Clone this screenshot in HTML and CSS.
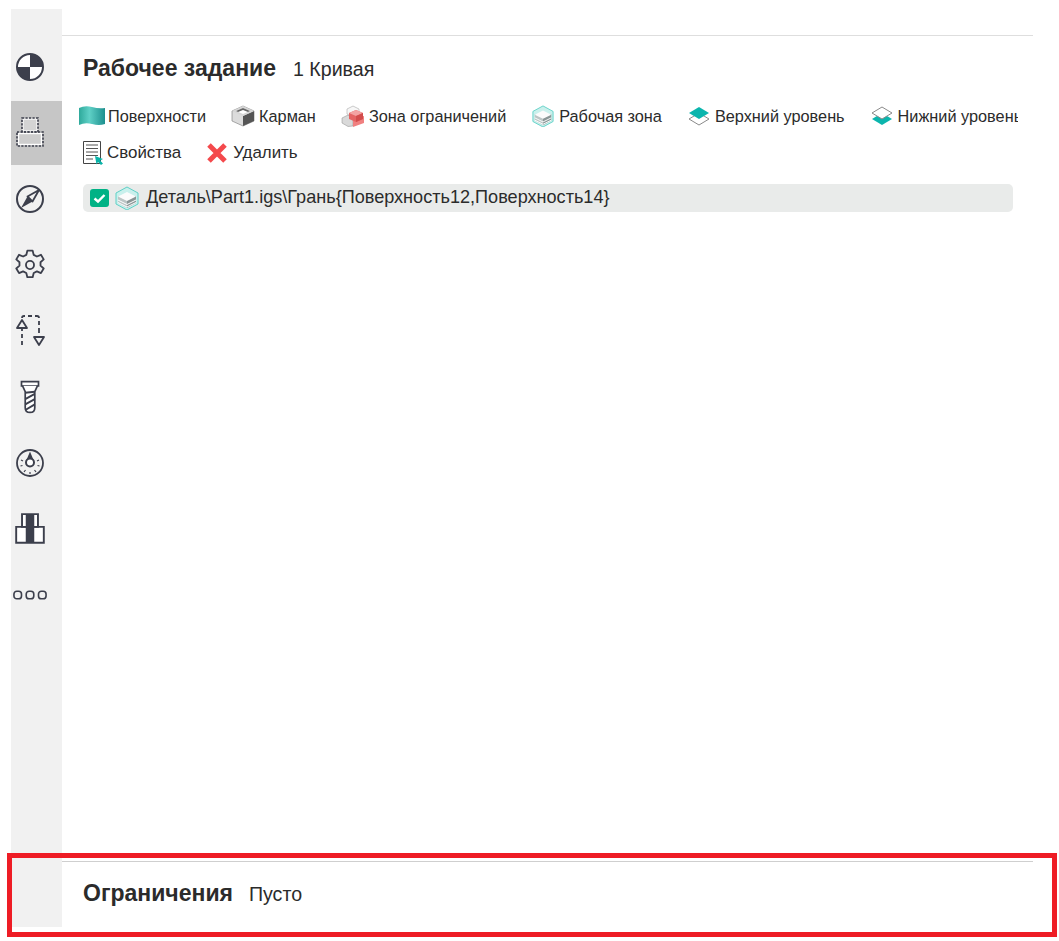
FILE: index.html
```html
<!DOCTYPE html>
<html lang="ru">
<head>
<meta charset="utf-8">
<title>Рабочее задание</title>
<link rel="stylesheet" href="styles.css">
</head>
<body>
<div class="page">
  <nav class="sidebar">
    <div class="nav-item">
      <svg class="nav-icon" viewBox="0 0 32 32"><circle cx="16" cy="16" r="13" fill="#fff" stroke="#3c3f4c" stroke-width="2"/><path d="M16 3a13 13 0 0 1 13 13H16z M16 16v13A13 13 0 0 1 3 16z" fill="#3c3f4c"/></svg>
    </div>
    <div class="nav-item active">
      <svg class="nav-icon" viewBox="0 0 32 32"><rect x="9" y="2" width="14" height="12" fill="#d4d4d4" stroke="#fff" stroke-width="1.200"/><rect x="8" y="1" width="16" height="14" fill="none" stroke="#3c3f4c" stroke-width="1.600" stroke-dasharray="2.200 1.300"/><rect x="4.500" y="16.500" width="23" height="11" fill="#cdcdcd" stroke="#fff" stroke-width="1.400"/><rect x="3" y="15" width="26" height="14" fill="none" stroke="#3c3f4c" stroke-width="1.600" stroke-dasharray="2.200 1.300"/></svg>
    </div>
    <div class="nav-item">
      <svg class="nav-icon" viewBox="0 0 32 32"><circle cx="16" cy="16" r="13" fill="none" stroke="#3c3f4c" stroke-width="2"/><path d="M25 7 18.500 18.500 13.500 13.500z" fill="none" stroke="#3c3f4c" stroke-width="1.800" stroke-linejoin="round"/><path d="M7 25 13.500 13.500 18.500 18.500z" fill="#3c3f4c"/></svg>
    </div>
    <div class="nav-item">
      <svg class="nav-icon wide" viewBox="0 0 32 32"><path d="M13.500 2.500h5l1 4 3 1.500 3.800-1.600 2.600 4.300-3 2.700v3.200l3 2.700-2.600 4.300-3.800-1.600-3 1.500-1 4h-5l-1-4-3-1.500-3.800 1.600-2.600-4.300 3-2.700v-3.200l-3-2.700 2.600-4.300 3.800 1.600 3-1.500z" fill="none" stroke="#3c3f4c" stroke-width="1.700" stroke-linejoin="round"/><circle cx="16" cy="16" r="3.800" fill="none" stroke="#3c3f4c" stroke-width="1.700"/></svg>
    </div>
    <div class="nav-item">
      <svg class="nav-icon" viewBox="0 0 32 32"><path d="M8 30v-4M8 23v-4M8 16v-4" fill="none" stroke="#3c3f4c" stroke-width="1.800"/><path d="M8 5l5 8H3z" fill="none" stroke="#3c3f4c" stroke-width="1.800" stroke-linejoin="round"/><path d="M8 3q0-2 2-2h1M14 1h4M21 1h2q2 0 2 2M25 6v4M25 13v5M25 30l-5-8h10z" fill="none" stroke="#3c3f4c" stroke-width="1.800" stroke-linejoin="round"/></svg>
    </div>
    <div class="nav-item">
      <svg class="nav-icon wide" viewBox="0 0 32 32"><path d="M8 1.500h16v4H8z" fill="#fff" stroke="#3c3f4c" stroke-width="1.600"/><path d="M9 5.500 11.500 11v15q0 4.500 4.500 4.500t4.500-4.500V11L23 5.500" fill="#fff" stroke="#3c3f4c" stroke-width="1.600"/><path d="M11.500 12 20.500 11M11.500 18 20.500 13M11.500 23 20.500 18M12 28 20.500 23" fill="none" stroke="#3c3f4c" stroke-width="1.800"/></svg>
    </div>
    <div class="nav-item">
      <svg class="nav-icon" viewBox="0 0 32 32"><circle cx="16" cy="16" r="13" fill="none" stroke="#3c3f4c" stroke-width="1.800"/><path d="M16 4.500 19.500 13h-7z" fill="#3c3f4c"/><circle cx="16" cy="15.500" r="4" fill="#fff" stroke="#3c3f4c" stroke-width="2"/><path d="M7 13l2 1M25 13l-2 1M6.500 19l2-.5M25.500 19l-2-.5M10 25l1.500-2M22 25l-1.500-2M16 27v-2" stroke="#3c3f4c" stroke-width="1.200"/></svg>
    </div>
    <div class="nav-item">
      <svg class="nav-icon wide" viewBox="0 0 32 32"><path d="M3 14h26v15H3z" fill="#fff" stroke="#3c3f4c" stroke-width="1.800"/><path d="M8.500 2h15v12h-15z" fill="#fff" stroke="#3c3f4c" stroke-width="1.800"/><path d="M12 2h8v27h-8z" fill="#3c3f4c"/></svg>
    </div>
    <div class="nav-item">
      <svg class="nav-icon wide" viewBox="0 0 36 12"><rect x="1" y="2" width="8" height="8" rx="3" fill="none" stroke="#3c3f4c" stroke-width="1.700"/><rect x="14" y="2" width="8" height="8" rx="3" fill="none" stroke="#3c3f4c" stroke-width="1.700"/><rect x="27" y="2" width="8" height="8" rx="3" fill="none" stroke="#3c3f4c" stroke-width="1.700"/></svg>
    </div>
  </nav>
  <main class="content">
    <section class="task">
      <header class="heading">
        <h2 class="title">Рабочее задание</h2>
        <span class="summary">1 Кривая</span>
      </header>
      <div class="toolbar">
        <div class="tool-row">
          <span class="tool">
            <svg class="tool-icon" viewBox="0 0 26 22"><defs><linearGradient id="flag" x1="0" x2="1" y1="0" y2="0"><stop offset="0" stop-color="#2ea99b"/><stop offset=".4" stop-color="#5fd0c6"/><stop offset="1" stop-color="#1d8f8e"/></linearGradient></defs><path d="M0 3q6-3 13-1t13 1v16q-6 2-13 0t-13 1z" fill="url(#flag)"/></svg>
            Поверхности
          </span>
          <span class="tool">
            <svg class="tool-icon" viewBox="0 0 26 22"><path d="M13 1 24 6v10l-11 5L2 16V6z" fill="#dcdcdc" stroke="#777" stroke-width=".6"/><path d="M13 11v10l11-5V6z" fill="#555"/><path d="M13 1 24 6l-11 5L2 6z" fill="#d6d6d6"/><path d="M13 3 20 6l-7 3-7-3z" fill="#fff"/><path d="M13 3 20 6l-2 1-5-2-5 2-2-1z" fill="#666"/></svg>
            Карман
          </span>
          <span class="tool">
            <svg class="tool-icon" viewBox="0 0 26 22"><path d="M2 13l6-3 5 3v8l-5 .5-6-3.500z" fill="#d9d9d9" stroke="#888" stroke-width=".5"/><path d="M13 13l11-2v7l-11 4z" fill="#f08080"/><path d="M7 4l6-3 6 3v5l-6 3-6-3z" fill="#f7f7f7" stroke="#999" stroke-width=".5"/><path d="M9 8l7-3 7 3v6l-7 3-7-3z" fill="#e46464"/><path d="M9 8l7-3 7 3-7 3z" fill="#f3a3a3"/><path d="M16 11v6l7-3V8z" fill="#d24c4c"/></svg>
            Зона ограничений
          </span>
          <span class="tool">
            <svg class="tool-icon" viewBox="0 0 26 24"><path d="M13 1 24 7v11l-11 6L2 18V7z" fill="#c9f0ec" stroke="#5fd0c6" stroke-width="1"/><path d="M13 12v10l9-5v-7z" fill="#8a9696"/><path d="M13 12v10l-9-5v-7z" fill="#bcc5c5"/><path d="M13 6l9 4.500-9 4.500-9-4.500z" fill="#fbfbfb"/><path d="M4 14l9 4.500 9-4.500M4 16.500l9 4.500 9-4.500" fill="none" stroke="#fff" stroke-width="1"/></svg>
            Рабочая зона
          </span>
          <span class="tool">
            <svg class="tool-icon" viewBox="0 0 26 20"><path d="M13 7 23 13 13 19 3 13z" fill="#fff" stroke="#8a8a8a"/><path d="M13 1l10 6-10 6L3 7z" fill="#0bb5ad"/></svg>
            Верхний уровень
          </span>
          <span class="tool">
            <svg class="tool-icon" viewBox="0 0 26 20"><path d="M13 7 23 13 13 19 3 13z" fill="#0bb5ad"/><path d="M13 1l10 6-10 6L3 7z" fill="#fff" stroke="#8a8a8a"/></svg>
            Нижний уровень
          </span>
        </div>
        <div class="tool-row second">
          <span class="tool">
            <svg class="tool-icon props" viewBox="0 0 20 24"><path d="M.5.500h17v22H.5z" fill="#fff" stroke="#444"/><path d="M3 4h12M3 7.500h12M3 11h12M3 14.500h12M3 18h7" stroke="#555"/><path d="M12 15l8 3-3 1.500 3 3-2 1.500-3-3-1.500 2.500z" fill="#09b3a8"/></svg>
            Свойства
          </span>
          <span class="tool">
            <svg class="tool-icon" viewBox="0 0 26 22"><path d="M5 3 21 19M21 3 5 19" stroke="#f4494c" stroke-width="5"/></svg>
            Удалить
          </span>
        </div>
      </div>
      <div class="entry">
        <svg class="check" viewBox="0 0 19 18"><rect width="19" height="18" rx="3" fill="#00b285"/><path d="M4.500 9.500 8 12.500 14.500 6" fill="none" stroke="#fff" stroke-width="2.400"/></svg>
        <svg class="entry-icon" viewBox="0 0 26 24"><path d="M13 1 24 7v11l-11 6L2 18V7z" fill="#c9f0ec" stroke="#5fd0c6" stroke-width="1"/><path d="M13 12v10l9-5v-7z" fill="#8a9696"/><path d="M13 12v10l-9-5v-7z" fill="#bcc5c5"/><path d="M13 6l9 4.500-9 4.500-9-4.500z" fill="#fbfbfb"/><path d="M4 14l9 4.500 9-4.500M4 16.500l9 4.500 9-4.500" fill="none" stroke="#fff" stroke-width="1"/></svg>
        <span class="entry-text">Деталь\Part1.igs\Грань{Поверхность12,Поверхность14}</span>
      </div>
    </section>
    <section class="limits">
      <header class="heading">
        <h2 class="title">Ограничения</h2>
        <span class="summary">Пусто</span>
      </header>
    </section>
  </main>
  <div class="highlight"></div>
</div>
</body>
</html>
```
FILE: styles.css
```css
* { box-sizing: border-box; }
html, body { margin: 0; background: #fff; }
body { font-family: "Liberation Sans", Arial, sans-serif; color: #2b2b2b; }
.page { position: relative; width: 1059px; height: 941px; padding: 9px 26px 14px 11px; display: flex; overflow: hidden; }
.sidebar { width: 51px; flex: none; background: #f1f1f1; padding-top: 26px; display: flex; flex-direction: column; gap: 2px; }
.nav-item { height: 64px; display: flex; align-items: center; justify-content: center; flex: none; padding-right: 13px; }
.nav-item.active { background: #c6c6c6; }
.nav-icon { width: 32px; height: 32px; display: block; flex: none; }
.nav-icon.wide { width: 34px; height: 34px; }
.content { flex: 1; min-width: 0; display: flex; flex-direction: column; padding-top: 26px; }
.task { flex: 1; border-top: 1px solid #dedede; }
.limits { height: 66px; border-top: 1px solid #cfcfcf; }
.heading { display: flex; align-items: baseline; height: 65px; padding: 19px 0 0 21px; }
.limits .heading { padding-top: 18px; }
.title { margin: 0; font-size: 23px; font-weight: bold; color: #2b2b2b; }
.summary { font-size: 19.6px; margin-left: 17px; }
.limits .summary { margin-left: 16px; }
.toolbar { display: flex; flex-direction: column; padding-left: 17px; margin-right: 15px; }
.tool-row { display: flex; gap: 24px; height: 36px; align-items: center; overflow: hidden; white-space: nowrap; margin-top: -3px; margin-bottom: 3px; }
.tool-row.second { padding-left: 4px; gap: 23px; margin-top: -2px; margin-bottom: 2px; }
.tool { display: inline-flex; align-items: center; gap: 3px; font-size: 16.3px; flex: none; }
.tool-row.second .tool { font-size: 16.9px; }
.tool-icon { width: 26px; height: 22px; display: block; flex: none; }
.tool-icon.props { width: 20px; height: 24px; margin-right: 1px; }
.entry { margin: 11px 20px 0 21px; height: 28px; border-radius: 5px; background: #e9ebea; display: flex; align-items: center; padding-left: 7px; font-size: 18.1px; }
.check { width: 19px; height: 18px; flex: none; }
.entry-icon { width: 26px; height: 24px; flex: none; margin-left: 5px; }
.entry-text { margin: 0 0 2px 6px; white-space: nowrap; }
.highlight { position: absolute; left: 7px; top: 853px; width: 1050px; height: 84px; border: 5px solid #ee1c25; pointer-events: none; }
```
